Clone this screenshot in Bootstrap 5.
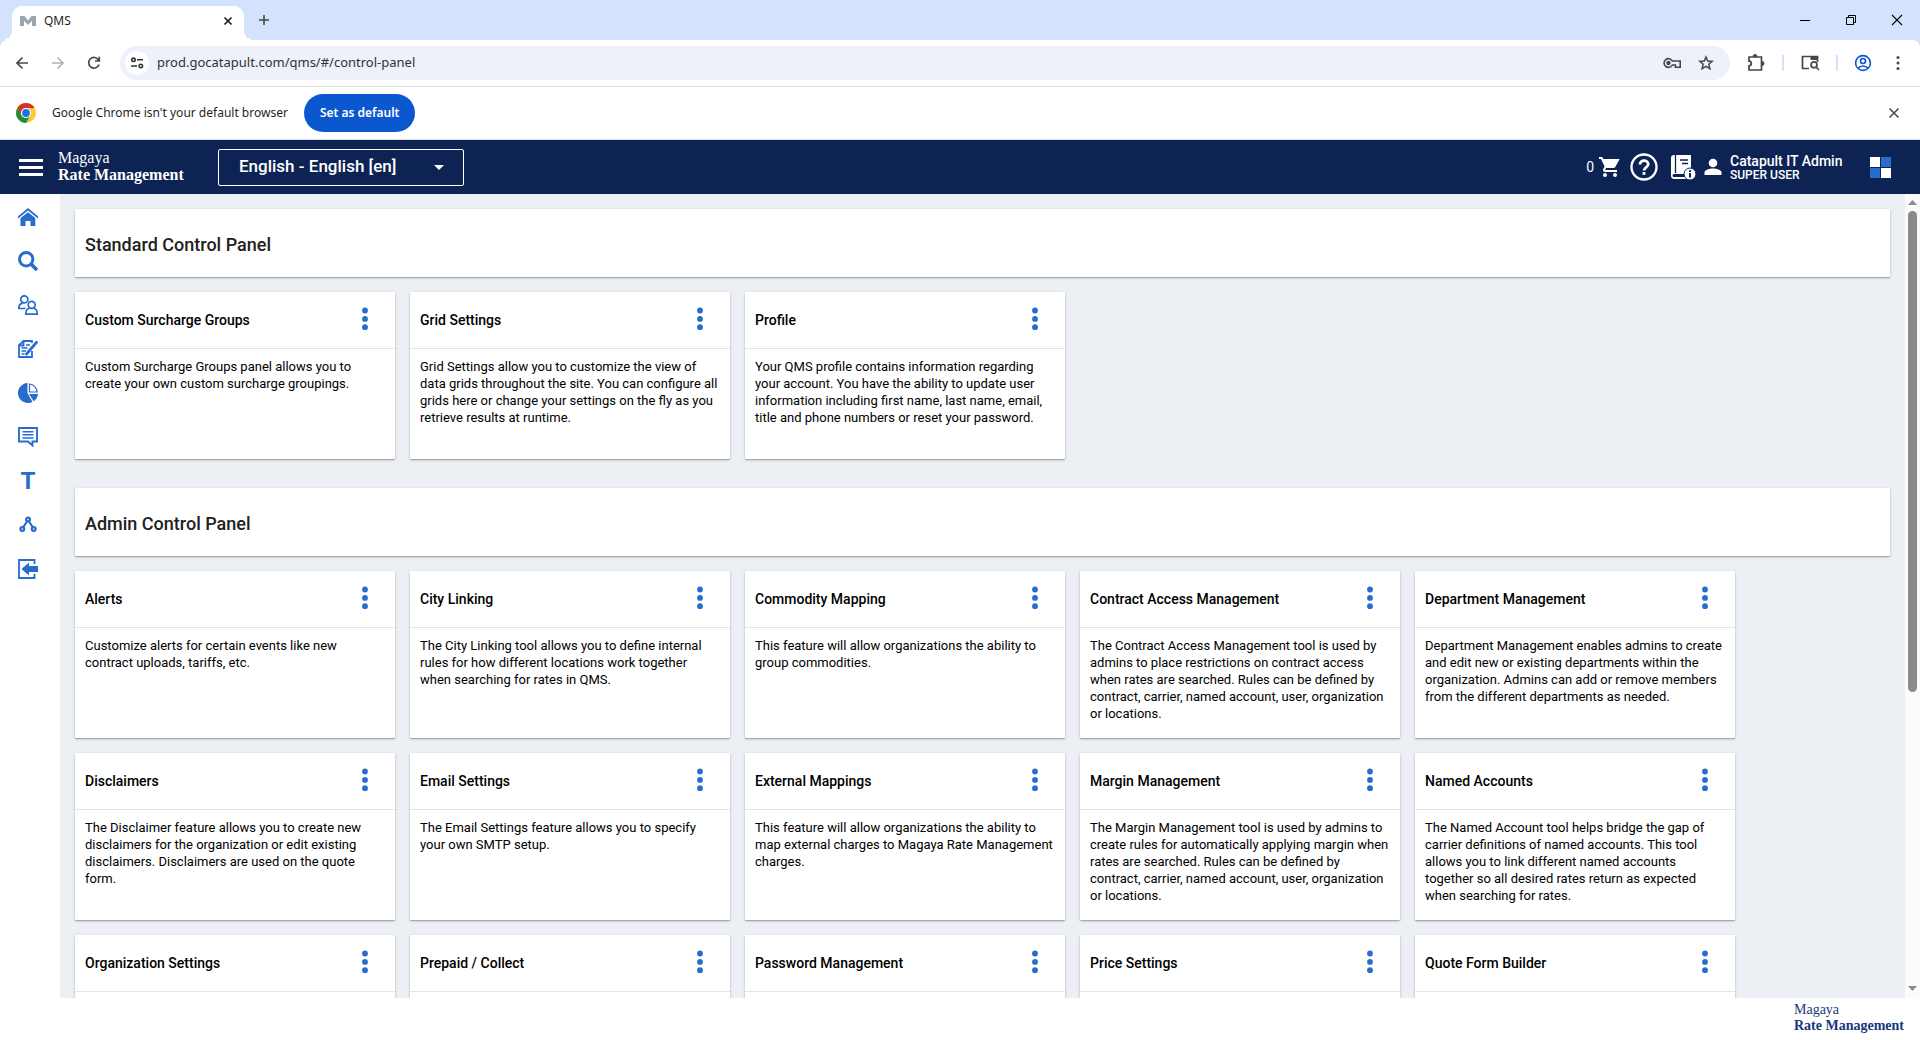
<!DOCTYPE html>
<html lang="en">
<head>
<meta charset="utf-8">
<meta name="viewport" content="width=device-width, initial-scale=1">
<title>QMS</title>
<link href="https://cdn.jsdelivr.net/npm/bootstrap@5.3.0/dist/css/bootstrap.min.css" rel="stylesheet">
<style>
  :root { --navy: #0c2354; --accent: #266dce; --canvas: #ecf0f5; --strip: #d3e3fd; }
  body { font-family: Roboto, "Liberation Sans", sans-serif; color: #000; }
  svg { display: block; flex: none; }
  button { padding: 0; border: 0; background: none; color: inherit; }
  .browser-ui { font-family: "Noto Sans", "Open Sans", sans-serif; font-size: 12px; color: #1f1f1f; }

  /* Tab strip */
  .tab-strip { height: 40px; padding: 6px 15px 0 12px; background: var(--strip); }
  .browser-tab { position: relative; width: 232px; height: 34px; padding: 0 10px 4px 8px; background: #fff; border-radius: 10px 10px 0 0; }
  .browser-tab::before, .browser-tab::after { content: ""; position: absolute; bottom: 0; width: 10px; height: 10px; }
  .browser-tab::before { left: -10px; background: radial-gradient(circle at 0 0, transparent 10px, #fff 10px); }
  .browser-tab::after { right: -10px; background: radial-gradient(circle at 100% 0, transparent 10px, #fff 10px); }
  .strip-icon { padding-bottom: 6px; margin-left: 14px; }
  .window-controls { gap: 30px; padding-bottom: 6px; }

  /* Toolbar */
  .toolbar-wrap { background: var(--strip); }
  .toolbar { height: 47px; padding: 0 14px; background: #fff; border-bottom: 1px solid #dcdee1; border-radius: 8px 8px 0 0; }
  .nav-icons { gap: 20px; margin-right: 18px; }
  .omnibox { height: 34px; padding: 0 16px 0 5px; background: #ecf1fa; border-radius: 17px; }
  .site-info { width: 24px; height: 24px; background: #fff; border-radius: 50%; }
  .address { border: 0; outline: 0; background: none; padding: 0; font-size: 13px; color: #303236; }
  .tool-sep { width: 2px; height: 16px; background: var(--strip); }

  /* Default browser notice */
  .notice { height: 53px; padding: 0 18px 0 16px; background: #fff; border-bottom: 1px solid #dcdee1; }
  .notice-btn { height: 38px; padding: 0 16px; border-radius: 19px; background: #0b57d0; color: #fff; font-weight: 600; }

  /* Application header */
  .app-header { height: 54px; padding: 0 29px 0 18px; background: var(--navy); color: #fff; }
  .menu-toggle { margin-right: 14px; }
  .brand-text { font-family: "Liberation Serif", serif; font-size: 16px; line-height: 17px; }
  .brand-text b { display: block; }
  .app-header .brand-text { width: 160px; padding-bottom: 2px; }
  .lang-box { position: relative; width: 246px; }
  .lang-select { width: 100%; height: 37px; padding: 0 40px 0 20px; appearance: none; background: var(--navy); border: 1px solid #fff; border-radius: 2px; color: #fff; font-size: 17px; font-weight: 500; }
  .lang-box svg { position: absolute; right: 20px; top: 16px; pointer-events: none; }
  .user-box { min-width: 116px; }
  .user-name { font-size: 14px; line-height: 15px; font-weight: 500; }
  .user-role { font-size: 12px; line-height: 12px; font-weight: 500; }

  /* Side menu */
  .side-menu { width: 60px; padding: 1px 0 0 18px; background: #fff; }
  .side-menu a { height: 44px; color: var(--accent); font-size: 24px; font-weight: 700; text-decoration: none; }
  .side-menu span { width: 20px; text-align: center; }

  /* Panels */
  .canvas-area { background: var(--canvas); padding: 15px 15px 0; }
  .shadow-box { background: #fff; border-radius: 1px; box-shadow: 0 1px 3px rgba(0,0,0,.22), 0 1px 1px rgba(0,0,0,.2); }
  .panel-title { height: 68px; padding: 3px 10px 0; margin: 0 0 15px; font-size: 18px; font-weight: 500; color: #212121; }
  .tile-grid { gap: 15px; margin-bottom: 29px; }
  .tile { width: 320px; height: 167px; }
  .tile header { height: 57px; padding: 0 26px 0 10px; border-bottom: 1px solid #e2e4e6; }
  .tile h3 { margin: 0; font-size: 14px; font-weight: 500; }
  .tile header button { color: var(--accent); padding-bottom: 3px; }
  .tile p { margin: 0; padding: 9px 10px; font-size: 13px; line-height: 17px; }

  /* Scroll rail */
  .rail { width: 15px; padding: 6px 3px 7px; background: #fbfbfb; color: #8a8a8a; }
  .rail-thumb { flex: 62; width: 9px; margin-top: 6px; border-radius: 5px; background: #8a8a8a; }
  .rail-rest { flex: 38; }

  .app-footer { height: 42px; padding: 4px 16px 0; background: #fff; color: #17387c; }
  .app-footer .brand-text { line-height: 16px; font-size: 14px; }
</style>
<script src="https://cdn.jsdelivr.net/npm/bootstrap@5.3.0/dist/js/bootstrap.bundle.min.js"></script>
</head>
<body class="vh-100 d-flex flex-column overflow-hidden">

<svg width="0" height="0" class="position-absolute" aria-hidden="true">
  <symbol id="dots" viewBox="0 0 8 24"><circle cx="4" cy="3.5" r="2.9"/><circle cx="4" cy="11.9" r="2.9"/><circle cx="4" cy="20.2" r="2.9"/></symbol>
</svg>

<div class="browser-ui flex-shrink-0">
  <div class="tab-strip d-flex align-items-center">
    <div class="browser-tab d-flex align-items-center gap-2">
      <svg width="16" height="12" viewBox="0 0 16 12" fill="#9ca6b0"><path d="M0 1h4.500L8 5.500 11.500 1H16v10h-4V6L8 10 4 6v5H0z"/></svg>
      <span class="flex-grow-1">QMS</span>
      <button type="button" aria-label="Close tab"><svg width="12" height="12" viewBox="0 0 12 12" stroke="#1f1f1f" stroke-width="1.700"><path d="M2.500 2.500l7 7m0-7l-7 7"/></svg></button>
    </div>
    <button type="button" class="strip-icon" aria-label="New tab"><svg width="12" height="12" viewBox="0 0 12 12" stroke="#474747" stroke-width="1.600"><path d="M6 1v10M1 6h10"/></svg></button>
    <div class="window-controls d-flex ms-auto">
      <button type="button" aria-label="Minimize"><svg width="16" height="14" viewBox="0 0 16 14" stroke="#000"><path d="M3 7.500h10"/></svg></button>
      <button type="button" aria-label="Restore"><svg width="16" height="14" viewBox="0 0 16 14" fill="none" stroke="#000"><path d="M3.500 4.500h7v7h-7zM5.500 4.500v-2h7v7h-2"/></svg></button>
      <button type="button" aria-label="Close"><svg width="16" height="14" viewBox="0 0 16 14" stroke="#000" stroke-width="1.100"><path d="M3 2l10 10M13 2L3 12"/></svg></button>
    </div>
  </div>

  <div class="toolbar-wrap">
    <div class="toolbar d-flex align-items-center">
      <div class="nav-icons d-flex">
        <button type="button" aria-label="Back"><svg width="16" height="16" viewBox="0 0 16 16" fill="none" stroke="#474747" stroke-width="1.700"><path d="M14 8H3M8.500 2.500L3 8l5.500 5.500"/></svg></button>
        <button type="button" aria-label="Forward"><svg width="16" height="16" viewBox="0 0 16 16" fill="none" stroke="#b0b2b5" stroke-width="1.700"><path d="M2 8h11M7.500 2.500L13 8l-5.500 5.500"/></svg></button>
        <button type="button" aria-label="Reload"><svg width="16" height="16" viewBox="0 0 16 16" fill="none" stroke="#474747" stroke-width="1.700"><path d="M13 9.500A5.300 5.300 0 1 1 12.500 5M13.300 1.800V6H9"/></svg></button>
      </div>
      <div class="omnibox d-flex align-items-center flex-grow-1">
        <button type="button" class="site-info d-flex align-items-center justify-content-center me-2" aria-label="Site information"><svg width="14" height="14" viewBox="0 0 14 14" fill="none" stroke="#303236" stroke-width="1.600"><circle cx="3.500" cy="3.800" r="1.700"/><path d="M7 3.800h6M1 10h6"/><circle cx="10.800" cy="10" r="1.700"/></svg></button>
        <input class="address flex-grow-1" type="text" aria-label="Address" value="prod.gocatapult.com/qms/#/control-panel">
        <button type="button" class="me-3" aria-label="Passwords"><svg width="19" height="14" viewBox="0 0 19 14" fill="none" stroke="#474747" stroke-width="1.600"><path d="M9.400 5A4.400 4.400 0 1 0 9.400 9h3v2.300h4.800V5z"/><circle cx="5.500" cy="7" r="1.400" fill="#474747"/></svg></button>
        <button type="button" aria-label="Bookmark this tab"><svg width="16" height="16" viewBox="0 0 16 16" fill="none" stroke="#474747" stroke-width="1.500"><path d="M8 2l1.700 4.100 4.500.3-3.400 2.900 1.100 4.300L8 11.300l-3.900 2.300 1.100-4.300L1.800 6.400l4.500-.3z"/></svg></button>
      </div>
      <button type="button" class="ms-3 me-3" aria-label="Extensions"><svg width="20" height="20" viewBox="0 0 20 20" fill="none" stroke="#474747" stroke-width="1.700"><path d="M3 4h12.500v13H3v-4.200a2.300 2.300 0 0 0 0-4.600z"/><path d="M7 3.500a2 2 0 0 1 4 0zM16 8.500a2 2 0 0 1 0 4z" fill="#474747" stroke-width="1"/></svg></button>
      <span class="tool-sep me-3"></span>
      <button type="button" class="me-3" aria-label="Search tabs"><svg width="20" height="18" viewBox="0 0 20 18" fill="none" stroke="#474747" stroke-width="1.700"><path d="M9 14.500H2.500v-12h15V8"/><path d="M10.500 2h7v4h-7z" fill="#474747" stroke="none"/><circle cx="14" cy="10.800" r="3"/><path d="M16 13l3 3"/></svg></button>
      <span class="tool-sep me-3"></span>
      <button type="button" class="me-3" aria-label="Profile"><svg width="18" height="18" viewBox="0 0 18 18" fill="none" stroke="#0b57d0" stroke-width="1.600"><circle cx="9" cy="9" r="7.400"/><circle cx="9" cy="7" r="2.500"/><path d="M4 14.300c2.600-3 7.400-3 10 0"/></svg></button>
      <button type="button" aria-label="Browser menu"><svg width="18" height="16" viewBox="0 0 18 16" fill="#474747"><circle cx="10" cy="2.500" r="1.500"/><circle cx="10" cy="8" r="1.500"/><circle cx="10" cy="13.500" r="1.500"/></svg></button>
    </div>
  </div>

  <div class="notice d-flex align-items-center">
    <svg class="me-3" width="20" height="20" viewBox="0 0 20 20"><circle cx="10" cy="10" r="10" fill="#fbc934"/><path d="M1.340 5A10 10 0 0 1 18.660 5H10A5 5 0 0 0 5.670 12.500z" fill="#d93025"/><path d="M1.340 5A10 10 0 0 0 10 20l4.330-7.500a5 5 0 0 1-8.660 0z" fill="#1e8e3e"/><circle cx="10" cy="10" r="5" fill="#fff"/><circle cx="10" cy="10" r="3.900" fill="#1a73e8"/></svg>
    <span class="me-3">Google Chrome isn't your default browser</span>
    <button type="button" class="notice-btn">Set as default</button>
    <button type="button" class="ms-auto" aria-label="Dismiss"><svg width="16" height="16" viewBox="0 0 16 16" stroke="#474747" stroke-width="1.500"><path d="M3.500 3.500l9 9m0-9l-9 9"/></svg></button>
  </div>
</div>

<nav class="app-header d-flex align-items-center flex-shrink-0">
  <button type="button" class="menu-toggle" aria-label="Toggle menu"><svg width="26" height="18" viewBox="0 0 26 18" fill="#fff"><path d="M1 1h24v3H1zM1 8h24v3H1zM1 15h24v3H1z"/></svg></button>
  <div class="brand-text">Magaya<b>Rate Management</b></div>
  <div class="lang-box">
    <select class="lang-select" aria-label="Language"><option>English - English [en]</option></select>
    <svg width="10" height="6" viewBox="0 0 10 6" fill="#fff"><path d="M0 0h10L5 5z"/></svg>
  </div>
  <div class="d-flex align-items-center ms-auto">
    <a href="#" class="d-flex align-items-center text-white text-decoration-none"><small class="me-1">0</small>
      <svg width="24" height="24" viewBox="0 0 24 24" fill="#fff"><path d="M7 18a2 2 0 1 0 0 4 2 2 0 0 0 0-4zM1 2v2h2l3.600 7.600-1.350 2.450C4.520 15.370 5.480 17 7 17h12v-2H7.420c-.14 0-.25-.11-.25-.25l.03-.12L8.100 13h7.450c.75 0 1.410-.41 1.750-1.030L21.700 4H5.210l-.94-2zM17 18a2 2 0 1 0 0 4 2 2 0 0 0 0-4z"/></svg></a>
    <a href="#" class="ms-2" aria-label="Help"><svg width="28" height="28" viewBox="0 0 28 28" fill="none" stroke="#fff"><circle cx="14" cy="14" r="12.500" stroke-width="2.300"/><path d="M10 11.500c0-5.300 8.200-5 8.200-.3 0 3-4.200 3.300-4.200 6.300" stroke-width="2.800"/><path d="M12.600 19h2.800v2.800h-2.800z" fill="#fff" stroke="none"/></svg></a>
    <a href="#" class="ms-2 ps-1" aria-label="Documentation"><svg width="26" height="26" viewBox="0 0 26 26"><path d="M4 1h17v19H4a1.500 1.500 0 0 0 0 3h17v2H4.500A3.500 3.500 0 0 1 1 21.500V4a3 3 0 0 1 3-3z" fill="#fff"/><path d="M5.500 1v18M10 6h8M12 9.500h6M4 21.500h16" stroke="#0c2354" stroke-width="1.300"/><circle cx="20" cy="20" r="6" fill="#fff" stroke="#0c2354"/><path d="M19 19h2v4.500h-2zM19 16.200h2v1.900h-2z" fill="#0c2354"/></svg></a>
    <a href="#" class="ms-2 d-flex align-items-center text-white text-decoration-none">
      <svg class="me-2" width="18" height="18" viewBox="0 0 18 18" fill="#fff"><circle cx="9" cy="5" r="4.300"/><path d="M.5 17v-2.500C.5 11.800 6 10.600 9 10.600s8.500 1.200 8.500 3.900V17z"/></svg>
      <span class="user-box"><span class="user-name d-block">Catapult IT Admin</span><span class="user-role d-block">SUPER USER</span></span></a>
    <button type="button" class="ms-4" aria-label="Applications"><svg width="21" height="21" viewBox="0 0 21 21"><path d="M0 0h10v10H0zM11 11h10v10H11z" fill="#fff"/><path d="M11 0h10v10H11zM0 11h10v10H0z" fill="#266dce"/></svg></button>
  </div>
</nav>

<div class="d-flex flex-grow-1 overflow-hidden">
  <nav class="side-menu flex-shrink-0" aria-label="Sections">
    <a href="#" class="d-flex align-items-center" aria-label="Home"><svg width="20" height="20" viewBox="0 0 20 20" fill="currentColor"><path d="M10 1l10 8.200v2.300L10 3.500 0 11.500V9.200z"/><path d="M10 5.300l7.300 5.700v8h-4.800v-5h-5v5H2.500v-8z"/></svg></a>
    <a href="#" class="d-flex align-items-center" aria-label="Search"><svg width="20" height="20" viewBox="0 0 20 20" fill="none" stroke="currentColor"><circle cx="8.200" cy="8.200" r="6.700" stroke-width="3"/><path d="M13 13l6 6" stroke-width="3.600"/></svg></a>
    <a href="#" class="d-flex align-items-center" aria-label="Users"><svg width="20" height="20" viewBox="0 0 20 20" fill="none" stroke="currentColor" stroke-width="1.700"><circle cx="6.300" cy="4.400" r="3.600"/><path d="M7.500 13.500H.8c0-3.500 1.800-5.200 4.200-5.400"/><circle cx="13.700" cy="9.800" r="3.500"/><path d="M11.500 13c-2.400.7-3.700 2.800-3.700 6.200h11.500c0-3.400-1.300-5.500-3.700-6.200"/></svg></a>
    <a href="#" class="d-flex align-items-center" aria-label="Quotes"><svg width="20" height="20" viewBox="0 0 20 20" fill="none" stroke="currentColor" stroke-width="1.800"><path d="M14 4V2H5.500L1 6.200V18h13v-6M1 6.500h4.500V2"/><path d="M8 6h4M3.500 9h6M3.500 12h4.500M3.500 15h3" stroke-width="1.300"/><path d="M19.300 2.500l-9.500 11-2 2.500" stroke-width="2.800"/></svg></a>
    <a href="#" class="d-flex align-items-center" aria-label="Reports"><svg width="20" height="20" viewBox="0 0 20 20"><path d="M9.500 0a10 10 0 1 0 5 18.900L9.500 10z" fill="currentColor"/><path d="M11 11h9a10 10 0 0 1-4.300 7.300z" fill="currentColor"/><path d="M11.500 1A8.600 8.600 0 0 1 19.200 9h-7.700z" fill="none" stroke="currentColor" stroke-width="1.200"/></svg></a>
    <a href="#" class="d-flex align-items-center" aria-label="Messages"><svg width="20" height="20" viewBox="0 0 20 20" fill="none" stroke="currentColor" stroke-width="1.900"><path d="M1 1h18v13.500h-4.500v4L10 14.500H1z"/><path d="M4.500 4.700h11M4.500 7.800h11M4.500 11h11" stroke-width="1.600"/></svg></a>
    <a href="#" class="d-flex align-items-center"><span>T</span></a>
    <a href="#" class="d-flex align-items-center" aria-label="Network"><svg width="20" height="20" viewBox="0 0 20 20" fill="none" stroke="currentColor" stroke-width="2.200"><circle cx="10" cy="4.500" r="1.900"/><circle cx="4.300" cy="14" r="1.900"/><circle cx="15.700" cy="14" r="1.900"/><path d="M9 6.500l-4 6M11 6.500l4 6"/></svg></a>
    <a href="#" class="d-flex align-items-center" aria-label="Sign out"><svg width="20" height="20" viewBox="0 0 20 20"><path d="M16.500 5V1H1v18h15.500v-4" fill="none" stroke="currentColor" stroke-width="1.800"/><path d="M3.500 10L11 3.500V7h9v6h-9v3.500z" fill="currentColor"/></svg></a>
  </nav>

  <main class="canvas-area flex-grow-1 overflow-hidden">
    <h2 class="panel-title shadow-box d-flex align-items-center">Standard Control Panel</h2>
    <div class="tile-grid d-flex flex-wrap">
      <article class="tile shadow-box"><header class="d-flex align-items-center justify-content-between"><h3>Custom Surcharge Groups</h3><button type="button" aria-label="Options"><svg width="8" height="24" fill="currentColor"><use href="#dots"/></svg></button></header><p>Custom Surcharge Groups panel allows you to create your own custom surcharge groupings.</p></article>
      <article class="tile shadow-box"><header class="d-flex align-items-center justify-content-between"><h3>Grid Settings</h3><button type="button" aria-label="Options"><svg width="8" height="24" fill="currentColor"><use href="#dots"/></svg></button></header><p>Grid Settings allow you to customize the view of data grids throughout the site. You can configure all grids here or change your settings on the fly as you retrieve results at runtime.</p></article>
      <article class="tile shadow-box"><header class="d-flex align-items-center justify-content-between"><h3>Profile</h3><button type="button" aria-label="Options"><svg width="8" height="24" fill="currentColor"><use href="#dots"/></svg></button></header><p>Your QMS profile contains information regarding your account. You have the ability to update user information including first name, last name, email, title and phone numbers or reset your password.</p></article>
    </div>

    <h2 class="panel-title shadow-box d-flex align-items-center">Admin Control Panel</h2>
    <div class="tile-grid d-flex flex-wrap">
      <article class="tile shadow-box"><header class="d-flex align-items-center justify-content-between"><h3>Alerts</h3><button type="button" aria-label="Options"><svg width="8" height="24" fill="currentColor"><use href="#dots"/></svg></button></header><p>Customize alerts for certain events like new contract uploads, tariffs, etc.</p></article>
      <article class="tile shadow-box"><header class="d-flex align-items-center justify-content-between"><h3>City Linking</h3><button type="button" aria-label="Options"><svg width="8" height="24" fill="currentColor"><use href="#dots"/></svg></button></header><p>The City Linking tool allows you to define internal rules for how different locations work together when searching for rates in QMS.</p></article>
      <article class="tile shadow-box"><header class="d-flex align-items-center justify-content-between"><h3>Commodity Mapping</h3><button type="button" aria-label="Options"><svg width="8" height="24" fill="currentColor"><use href="#dots"/></svg></button></header><p>This feature will allow organizations the ability to group commodities.</p></article>
      <article class="tile shadow-box"><header class="d-flex align-items-center justify-content-between"><h3>Contract Access Management</h3><button type="button" aria-label="Options"><svg width="8" height="24" fill="currentColor"><use href="#dots"/></svg></button></header><p>The Contract Access Management tool is used by admins to place restrictions on contract access when rates are searched. Rules can be defined by contract, carrier, named account, user, organization or locations.</p></article>
      <article class="tile shadow-box"><header class="d-flex align-items-center justify-content-between"><h3>Department Management</h3><button type="button" aria-label="Options"><svg width="8" height="24" fill="currentColor"><use href="#dots"/></svg></button></header><p>Department Management enables admins to create and edit new or existing departments within the organization. Admins can add or remove members from the different departments as needed.</p></article>
      <article class="tile shadow-box"><header class="d-flex align-items-center justify-content-between"><h3>Disclaimers</h3><button type="button" aria-label="Options"><svg width="8" height="24" fill="currentColor"><use href="#dots"/></svg></button></header><p>The Disclaimer feature allows you to create new disclaimers for the organization or edit existing disclaimers. Disclaimers are used on the quote form.</p></article>
      <article class="tile shadow-box"><header class="d-flex align-items-center justify-content-between"><h3>Email Settings</h3><button type="button" aria-label="Options"><svg width="8" height="24" fill="currentColor"><use href="#dots"/></svg></button></header><p>The Email Settings feature allows you to specify your own SMTP setup.</p></article>
      <article class="tile shadow-box"><header class="d-flex align-items-center justify-content-between"><h3>External Mappings</h3><button type="button" aria-label="Options"><svg width="8" height="24" fill="currentColor"><use href="#dots"/></svg></button></header><p>This feature will allow organizations the ability to map external charges to Magaya Rate Management charges.</p></article>
      <article class="tile shadow-box"><header class="d-flex align-items-center justify-content-between"><h3>Margin Management</h3><button type="button" aria-label="Options"><svg width="8" height="24" fill="currentColor"><use href="#dots"/></svg></button></header><p>The Margin Management tool is used by admins to create rules for automatically applying margin when rates are searched. Rules can be defined by contract, carrier, named account, user, organization or locations.</p></article>
      <article class="tile shadow-box"><header class="d-flex align-items-center justify-content-between"><h3>Named Accounts</h3><button type="button" aria-label="Options"><svg width="8" height="24" fill="currentColor"><use href="#dots"/></svg></button></header><p>The Named Account tool helps bridge the gap of carrier definitions of named accounts. This tool allows you to link different named accounts together so all desired rates return as expected when searching for rates.</p></article>
      <article class="tile shadow-box"><header class="d-flex align-items-center justify-content-between"><h3>Organization Settings</h3><button type="button" aria-label="Options"><svg width="8" height="24" fill="currentColor"><use href="#dots"/></svg></button></header></article>
      <article class="tile shadow-box"><header class="d-flex align-items-center justify-content-between"><h3>Prepaid / Collect</h3><button type="button" aria-label="Options"><svg width="8" height="24" fill="currentColor"><use href="#dots"/></svg></button></header></article>
      <article class="tile shadow-box"><header class="d-flex align-items-center justify-content-between"><h3>Password Management</h3><button type="button" aria-label="Options"><svg width="8" height="24" fill="currentColor"><use href="#dots"/></svg></button></header></article>
      <article class="tile shadow-box"><header class="d-flex align-items-center justify-content-between"><h3>Price Settings</h3><button type="button" aria-label="Options"><svg width="8" height="24" fill="currentColor"><use href="#dots"/></svg></button></header></article>
      <article class="tile shadow-box"><header class="d-flex align-items-center justify-content-between"><h3>Quote Form Builder</h3><button type="button" aria-label="Options"><svg width="8" height="24" fill="currentColor"><use href="#dots"/></svg></button></header></article>
    </div>
  </main>

  <div class="rail d-flex flex-column flex-shrink-0" aria-hidden="true">
    <svg width="9" height="5" viewBox="0 0 9 5" fill="currentColor"><path d="M0 5h9L4.500 0z"/></svg>
    <div class="rail-thumb"></div>
    <div class="rail-rest"></div>
    <svg width="9" height="5" viewBox="0 0 9 5" fill="currentColor"><path d="M0 0h9L4.500 5z"/></svg>
  </div>
</div>

<footer class="app-footer d-flex justify-content-end flex-shrink-0">
  <div class="brand-text">Magaya<b>Rate Management</b></div>
</footer>
</body>
</html>
